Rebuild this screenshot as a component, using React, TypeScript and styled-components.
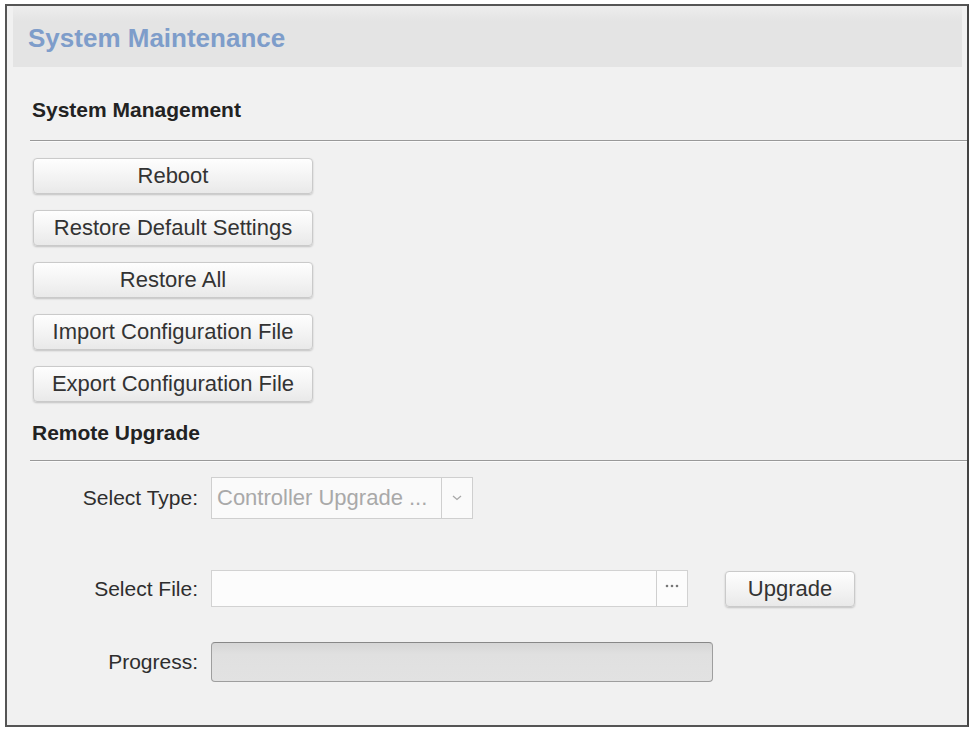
import React from 'react';
import styled, { createGlobalStyle } from 'styled-components';

const GlobalStyle = createGlobalStyle`
  body {
    margin: 0;
    background: #ffffff;
    font-family: 'Liberation Sans', Arial, sans-serif;
  }
`;

const Frame = styled.div`
  box-sizing: border-box;
  width: 964px;
  height: 723px;
  margin: 4px 0 0 5px;
  border: 2px solid #555;
  border-right-color: #444;
  background: #f1f1f1;
`;

const Header = styled.div`
  display: flex;
  align-items: center;
  height: 61px;
  margin: 0 5px 0 6px;
  padding: 3px 0 0 15px;
  box-sizing: border-box;
  background: linear-gradient(#ededed, #e4e4e4 25%, #e4e4e4);
  > h1 {
    margin: 0;
    font-size: 26px;
    font-weight: bold;
    color: #7e9dca;
  }
`;

const SectionHead = styled.div<{ $top: number; $bottom: number }>`
  margin-left: 23px;
  padding: ${(p) => p.$top}px 0 ${(p) => p.$bottom}px 2px;
  border-bottom: 1px solid #999;
  box-shadow: 0 1px 0 #fbfbfb;
  font-size: 21px;
  line-height: 24px;
  font-weight: bold;
  color: #222;
`;

const ButtonColumn = styled.div`
  display: flex;
  flex-direction: column;
  gap: 16px;
  padding: 17px 0 0 26px;
`;

const Button = styled.button<{ $width?: number }>`
  box-sizing: border-box;
  width: ${(p) => p.$width ?? 280}px;
  height: 36px;
  padding: 0;
  border: 1px solid #cacaca;
  border-radius: 4px;
  background: linear-gradient(#fefefe, #f4f4f4 50%, #e9e9e9);
  box-shadow: 0 1px 2px rgba(0, 0, 0, 0.2);
  font-family: 'Liberation Sans', Arial, sans-serif;
  font-size: 22px;
  color: #333;
  cursor: pointer;
`;

const FormRow = styled.div<{ $top: number }>`
  display: flex;
  align-items: center;
  margin-top: ${(p) => p.$top}px;
`;

const Label = styled.div`
  width: 191px;
  margin-right: 13px;
  text-align: right;
  font-size: 21px;
  color: #2e2e2e;
`;

const SelectBox = styled.div`
  box-sizing: border-box;
  display: flex;
  width: 262px;
  height: 42px;
  border: 1px solid #cfcfcf;
  background: #fafafa;
  > span {
    flex: 1;
    padding-left: 5px;
    line-height: 40px;
    font-size: 22px;
    color: #a9a9a9;
    white-space: nowrap;
    overflow: hidden;
  }
`;

const SideCell = styled.div<{ $align: string }>`
  display: flex;
  align-items: ${(p) => p.$align};
  justify-content: center;
  width: 31px;
  border-left: 1px solid #cfcfcf;
  box-sizing: border-box;
`;

const FileInput = styled.div`
  box-sizing: border-box;
  display: flex;
  width: 477px;
  height: 37px;
  border: 1px solid #d2d2d2;
  background: #fcfcfc;
  margin-right: 37px;
  > div:first-child {
    flex: 1;
  }
`;

const ProgressBar = styled.div`
  box-sizing: border-box;
  width: 502px;
  height: 40px;
  border: 1px solid #9e9e9e;
  border-top-color: #888;
  border-radius: 4px;
  background: linear-gradient(#d6d6d6, #e0e0e0 30%, #e2e2e2);
`;

const Chevron = () => (
  <svg width="10" height="6" viewBox="0 0 10 6">
    <path d="M1 1 L5 4.5 L9 1" fill="none" stroke="#a8a8a8" strokeWidth="1.3" />
  </svg>
);

const Dots = () => (
  <svg width="16" height="4" viewBox="0 0 16 4" style={{ marginTop: 13 }}>
    <circle cx="3" cy="2" r="1.3" fill="#777" />
    <circle cx="8" cy="2" r="1.3" fill="#777" />
    <circle cx="13" cy="2" r="1.3" fill="#777" />
  </svg>
);

const App = () => {
  const actions = [
    'Reboot',
    'Restore Default Settings',
    'Restore All',
    'Import Configuration File',
    'Export Configuration File',
  ];

  return (
    <>
      <GlobalStyle />
      <Frame>
        <Header>
          <h1>System Maintenance</h1>
        </Header>
        <SectionHead $top={31} $bottom={18}>
          System Management
        </SectionHead>
        <ButtonColumn>
          {actions.map((a) => (
            <Button key={a}>{a}</Button>
          ))}
        </ButtonColumn>
        <SectionHead $top={19} $bottom={15}>
          Remote Upgrade
        </SectionHead>
        <FormRow $top={16}>
          <Label>Select Type:</Label>
          <SelectBox>
            <span>Controller Upgrade ...</span>
            <SideCell $align="center">
              <Chevron />
            </SideCell>
          </SelectBox>
        </FormRow>
        <FormRow $top={51}>
          <Label>Select File:</Label>
          <FileInput>
            <div />
            <SideCell $align="flex-start">
              <Dots />
            </SideCell>
          </FileInput>
          <Button $width={130}>Upgrade</Button>
        </FormRow>
        <FormRow $top={35}>
          <Label>Progress:</Label>
          <ProgressBar />
        </FormRow>
      </Frame>
    </>
  );
};

export default App;
